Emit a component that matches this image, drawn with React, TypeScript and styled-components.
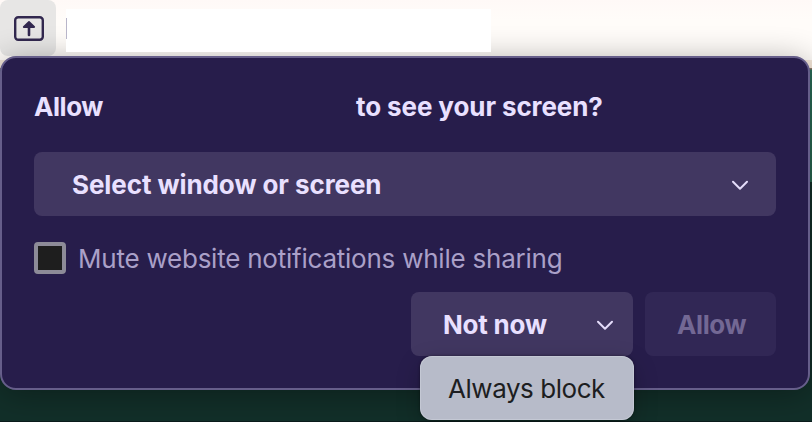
import React from 'react';
import styled, { createGlobalStyle } from 'styled-components';

const GlobalStyle = createGlobalStyle`
  * { box-sizing: border-box; }
  body { margin: 0; overflow: hidden; font-family: Inter, 'Liberation Sans', sans-serif; }
  button { font: inherit; border: 0; margin: 0; }
`;

const Page = styled.main`
  width: 812px;
  height: 422px;
  overflow: hidden;
  background: linear-gradient(
    #fff9f7 0, #fffcf9 20px, #fffcf9 60px,
    #f3e6d8 60px, #f3e6d8 68px,
    #8d7568 68px, #8d7568 69px,
    #2a6b57 70px, #27654f 182px,
    #122f29 182px, #122f29 421px, #0b1c1b 421px
  );
`;

const Toolbar = styled.header`
  display: flex;
  align-items: flex-start;
  height: 56px;
`;

const ShareButton = styled.button`
  display: flex;
  align-items: center;
  justify-content: center;
  width: 56px;
  height: 56px;
  padding: 1px 0 0 2px;
  border-radius: 8px;
  background: #e7e6e5;
`;

const AddressField = styled.div`
  position: relative;
  z-index: 1;
  display: flex;
  align-items: flex-start;
  width: 425px;
  height: 43px;
  margin: 9px 0 0 10px;
  padding-top: 9px;
  background: #fff;
`;

const Caret = styled.span`
  width: 1px;
  height: 21px;
  background: #b8b5c9;
`;

const Panel = styled.section`
  position: relative;
  display: flex;
  flex-direction: column;
  width: 810px;
  height: 334px;
  padding: 32px;
  border: 2px solid #665e8a;
  border-radius: 16px;
  background: #271d4b;
  box-shadow: 0 4px 32px rgba(0, 0, 0, 0.32);
`;

const Label = styled.span<{ $track?: number; $weight?: number }>`
  font-size: 26px;
  line-height: 32px;
  font-weight: ${(p) => p.$weight ?? 660};
  letter-spacing: ${(p) => p.$track ?? -0.22}px;
  white-space: pre;
`;

const Title = styled.h1`
  display: flex;
  height: 32px;
  margin: 1px 0 29px;
  color: #e9e0ff;
`;

const SiteName = styled.span`
  width: 254px;
`;

const TitleStart = styled.span`
  display: flex;
  width: 68px;
`;

const Picker = styled.button`
  display: flex;
  align-items: center;
  justify-content: space-between;
  height: 64px;
  padding: 2px 26px 0 38px;
  border-radius: 8px;
  background: #413761;
  color: #e9e0ff;
`;

const MuteRow = styled.label`
  display: flex;
  align-items: center;
  gap: 12px;
  height: 32px;
  margin: 26px 0 18px;
  color: #aaa0c8;
`;

const MuteText = styled.span`
  display: flex;
  padding-top: 2px;
`;

const Checkbox = styled.span`
  width: 32px;
  height: 32px;
  border: 4px solid #8d8b98;
  border-radius: 4px;
  background: #1e1e1e;
`;

const Actions = styled.div`
  display: flex;
  justify-content: flex-end;
  gap: 12px;
`;

const SplitButton = styled.button`
  display: flex;
  align-items: center;
  justify-content: space-between;
  width: 222px;
  height: 64px;
  padding: 2px 18px 0 32px;
  border-radius: 8px;
  background: #413761;
  color: #e9e0ff;
`;

const AllowButton = styled.button`
  display: flex;
  align-items: center;
  width: 131px;
  height: 64px;
  padding: 2px 0 0 32px;
  border-radius: 8px;
  background: #312755;
  color: #736894;
`;

const Menu = styled.div`
  position: absolute;
  top: 298px;
  left: 418px;
  display: flex;
  align-items: center;
  width: 214px;
  height: 64px;
  padding: 2px 0 0 28px;
  border-radius: 12px;
  background: #b7bbc9;
  box-shadow: inset 0 0 0 1px rgba(205, 208, 220, 0.6), 0 0 3px rgba(0, 0, 0, 0.45), 0 8px 24px rgba(0, 0, 0, 0.22);
  color: #1d1e21;
`;

const Chevron = () => (
  <svg width="20" height="14" viewBox="0 0 20 14" fill="none" stroke="#e4dcfa" strokeWidth="2" strokeLinecap="round" strokeLinejoin="round">
    <path d="M3 3.8L10 10.8L17 3.8" />
  </svg>
);

const ShareIcon = () => (
  <svg width="30" height="25" viewBox="0 0 30 25" fill="none" stroke="#32284f">
    <rect x="1.2" y="1.2" width="27.6" height="22.6" rx="3" strokeWidth="2.4" />
    <path d="M15 9V19" strokeWidth="2.6" strokeLinecap="round" />
    <path d="M15 6L20.2 11H9.8Z" fill="#32284f" strokeWidth="1.8" strokeLinejoin="round" />
  </svg>
);

export default function App() {
  return (
    <Page>
      <GlobalStyle />
      <Toolbar>
        <ShareButton aria-label="Share screen"><ShareIcon /></ShareButton>
        <AddressField><Caret /></AddressField>
      </Toolbar>
      <Panel>
        <Title>
          <TitleStart><Label $track={-0.45}>Allow</Label></TitleStart>
          <SiteName />
          <Label $track={-0.1}>to see your screen?</Label>
        </Title>
        <Picker>
          <Label $track={-0.08}>Select window or screen</Label>
          <Chevron />
        </Picker>
        <MuteRow>
          <Checkbox />
          <MuteText>
            <Label $weight={430} $track={-0.23}>Mute website notifications while sharing</Label>
          </MuteText>
        </MuteRow>
        <Actions>
          <SplitButton>
            <Label>Not now</Label>
            <Chevron />
          </SplitButton>
          <AllowButton disabled><Label $track={-0.4}>Allow</Label></AllowButton>
        </Actions>
        <Menu role="menu"><Label $weight={430} $track={-0.45} role="menuitem">Always block</Label></Menu>
      </Panel>
    </Page>
  );
}
